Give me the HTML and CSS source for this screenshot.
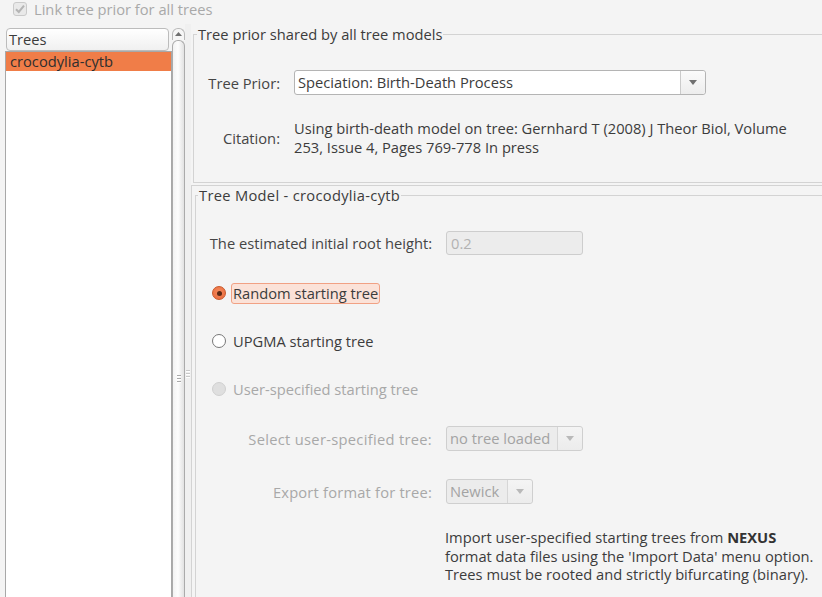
FILE: index.html
```html
<!DOCTYPE html>
<html>
<head>
<meta charset="utf-8">
<link rel="stylesheet" href="styles.css">
</head>
<body>
<div class="app">
  <div class="topbar">
    <span class="chk"><svg width="12" height="12" viewBox="0 0 12 12"><path d="M2 6.2 L4.8 9 L10 2.6" fill="none" stroke="#b4b4b4" stroke-width="2"/></svg></span>
    <span class="chk-label">Link tree prior for all trees</span>
  </div>
  <div class="main">
    <div class="left">
      <div class="list">
        <div class="list-header">Trees</div>
        <div class="list-body">
          <div class="row sel">crocodylia-cytb</div>
        </div>
      </div>
      <div class="scrollbar">
        <div class="sb-up"><svg width="7" height="4" viewBox="0 0 7 4"><path d="M0 4 L3.5 0 L7 4 Z" fill="#6f6f6f"/></svg></div>
        <div class="sb-thumb"><div class="grip"><i></i><i></i><i></i></div></div>
      </div>
    </div>
    <div class="splitter"><div class="grip light"><i></i><i></i><i></i></div></div>
    <div class="right">
      <fieldset class="group g1">
        <legend>Tree prior shared by all tree models</legend>
        <div class="form1">
          <span class="lbl">Tree Prior:</span>
          <div class="combo wide">
            <span class="combo-text">Speciation: Birth-Death Process</span>
            <span class="combo-btn"><svg width="8" height="5" viewBox="0 0 8 5"><path d="M0 0 L8 0 L4 5 Z" fill="#707070"/></svg></span>
          </div>
          <span class="lbl">Citation:</span>
          <div class="citation">Using birth-death model on tree: Gernhard T (2008) J Theor Biol, Volume<br>253, Issue 4, Pages 769-778 In press</div>
        </div>
      </fieldset>
      <div class="lower">
        <fieldset class="group g2">
          <legend>Tree Model - crocodylia-cytb</legend>
          <div class="form2">
            <span class="lbl">The estimated initial root height:</span>
            <div class="field disabled">0.2</div>

            <div class="radio-row">
              <span class="radio on"></span>
              <span class="rlabel focus">Random starting tree</span>
            </div>
            <div class="radio-row">
              <span class="radio"></span>
              <span class="rlabel">UPGMA starting tree</span>
            </div>
            <div class="radio-row">
              <span class="radio off"></span>
              <span class="rlabel dim">User-specified starting tree</span>
            </div>

            <span class="lbl dim wide-ls r-first">Select user-specified tree:</span>
            <div class="combo disabled w137 r-first">
              <span class="combo-text">no tree loaded</span>
              <span class="combo-btn"><svg width="8" height="5" viewBox="0 0 8 5"><path d="M0 0 L8 0 L4 5 Z" fill="#b9b9b9"/></svg></span>
            </div>

            <span class="lbl dim mid-ls">Export format for tree:</span>
            <div class="combo disabled w87">
              <span class="combo-text">Newick</span>
              <span class="combo-btn"><svg width="8" height="5" viewBox="0 0 8 5"><path d="M0 0 L8 0 L4 5 Z" fill="#b9b9b9"/></svg></span>
            </div>

            <div class="info">Import user-specified starting trees from <b>NEXUS</b><br>format data files using the 'Import Data' menu option.<br>Trees must be rooted and strictly bifurcating (binary).</div>
          </div>
        </fieldset>
      </div>
    </div>
  </div>
</div>
</body>
</html>
```
FILE: styles.css
```css
* { box-sizing: border-box; }
html, body { margin: 0; padding: 0; height: 597px; overflow: hidden; }
body {
  background: #f4f4f4;
  font-family: "Open Sans", "Noto Sans", sans-serif;
  font-size: 14.7px;
  color: #3c3c3c;
}
.app { display: flex; flex-direction: column; height: 597px; }

/* top checkbox */
.topbar { height: 24px; display: flex; align-items: flex-start; padding-left: 13px; gap: 7px; }
.chk {
  margin-top: 2px; width: 14px; height: 14px;
  border: 1px solid #cacaca; border-radius: 3px; background: #e9e9e9;
  display: flex; align-items: center; justify-content: center;
}
.chk-label { line-height: 19px; color: #a9a9a9; }

.main { flex: 1; display: flex; min-height: 0; }

/* left list */
.left { display: flex; padding: 4px 0 0 5px; }
.list { width: 167px; display: flex; flex-direction: column; }
.list-header {
  height: 23px; margin: 0 3px 0 1px; padding-left: 2px;
  border: 1px solid #bcbcbc; border-radius: 4px;
  background: linear-gradient(#ffffff, #f0f0f0);
  line-height: 20px; color: #3c3c3c;
}
.list-body { flex: 1; background: #fff; border: 1px solid #a8a8a8; border-bottom: none; }
.row { height: 19px; line-height: 18px; padding-left: 4px; }
.row.sel { background: #f07d48; color: #2e2e2e; }

/* scrollbar */
.scrollbar { width: 13px; display: flex; flex-direction: column; }
.sb-up {
  height: 12px; border: 1px solid #bababa; border-bottom: none;
  border-radius: 6px 6px 0 0; background: #f6f6f6;
  display: flex; justify-content: center; padding-top: 3px;
}
.sb-thumb {
  flex: 1; border: 1px solid #ababab; border-bottom: none; border-radius: 6px 6px 0 0;
  background: linear-gradient(to right, #f2f2f2, #fdfdfd 45%, #e2e2e2);
  display: flex; flex-direction: column; align-items: center;
}
.grip { margin-top: 334px; display: flex; flex-direction: column; gap: 1px; }
.grip i { display: block; width: 4px; height: 2px; background: #a9a9a9; border-bottom: 1px solid #fff; }
.grip.light i { background: #c9c9c9; }

.splitter { width: 6px; display: flex; flex-direction: column; align-items: center; background: #f0f0f0; }
.splitter .grip { margin-top: 346px; }

/* right panel */
.right { flex: 1; display: flex; flex-direction: column; min-width: 0; }
.group { border: 1px solid #d3d3d3; border-right: none; margin: 0; min-width: 0; }
.group legend { padding: 0 1px; color: #3c3c3c; }
.g1 { margin: 1px 0 0 2px; height: 158px; padding: 26px 0 0 0; }
.g1 legend { margin-left: 3px; line-height: 19px; }
.form1 { display: grid; grid-template-columns: 86px 1fr; column-gap: 14px; row-gap: 24px; align-items: center; }
.lbl { text-align: right; color: #454545; white-space: nowrap; }
.lbl.dim { color: #a8a8a8; }
.wide-ls { letter-spacing: 0.3px; }
.mid-ls { letter-spacing: 0.2px; }
.citation { line-height: 19px; color: #3c3c3c; }

.combo {
  display: flex; height: 25px; border: 1px solid #b4b4b4; border-radius: 3px; background: #fff;
}
.combo.wide { width: 412px; }
.combo-text { flex: 1; padding-left: 3px; line-height: 22px; white-space: nowrap; overflow: hidden; }
.combo-btn {
  width: 25px; border-left: 1px solid #cbcbcb; border-radius: 0 3px 3px 0;
  display: flex; align-items: center; justify-content: center;
  background: linear-gradient(#fbfbfb, #ededed);
}
.combo.disabled { border-color: #cfcfcf; background: #ececec; color: #a3a3a3; }
.combo.disabled .combo-btn { border-left-color: #d6d6d6; background: linear-gradient(#f4f4f4, #ececec); }
.w137 { width: 137px; }
.w87 { width: 87px; }

.lower { flex: 1; margin-top: 2px; border-top: 1px solid #d3d3d3; border-left: 1px solid #d3d3d3; }
.g2 { margin: 0 0 0 3px; border-bottom: none; padding: 27px 0 0 0; height: 100%; }
.g2 legend { margin-left: 2px; line-height: 18px; letter-spacing: 0.3px; }
.form2 { display: grid; grid-template-columns: 236px 1fr; column-gap: 14px; row-gap: 28px; align-items: center; }
.field {
  width: 137px; height: 24px; border: 1px solid #cdcdcd; border-radius: 3px;
  padding-left: 4px; line-height: 22px;
}
.field.disabled { background: #ececec; color: #b2b2b2; }

.radio-row { grid-column: 1 / -1; display: flex; align-items: center; height: 20px; padding-left: 16px; }
.radio {
  width: 14px; height: 14px; border-radius: 50%; border: 1px solid #777; background: #fff;
  display: flex; align-items: center; justify-content: center; flex: none;
}
.radio.on { border-color: #c8582a; background: radial-gradient(circle at 50% 40%, #f58a5c, #e8683a); }
.radio.on::after { content: ""; width: 5px; height: 5px; border-radius: 50%; background: #5b2a16; }
.radio.off { border-color: #d0d0d0; background: #dfdfdf; }
.rlabel { margin-left: 5px; height: 21px; line-height: 18px; padding: 0 1px; border: 1px solid transparent; color: #3c3c3c; }
.rlabel.focus { background: #fbe2d8; border-color: #f1a184; border-radius: 3px; }
.rlabel.dim { color: #a8a8a8; }
.r-first { margin-top: -1px; }

.info { grid-column: 2; margin: -4px 0 0 -1px; line-height: 18.5px; color: #3c3c3c; white-space: nowrap; }
.info b { font-weight: 700; color: #333; }
```
